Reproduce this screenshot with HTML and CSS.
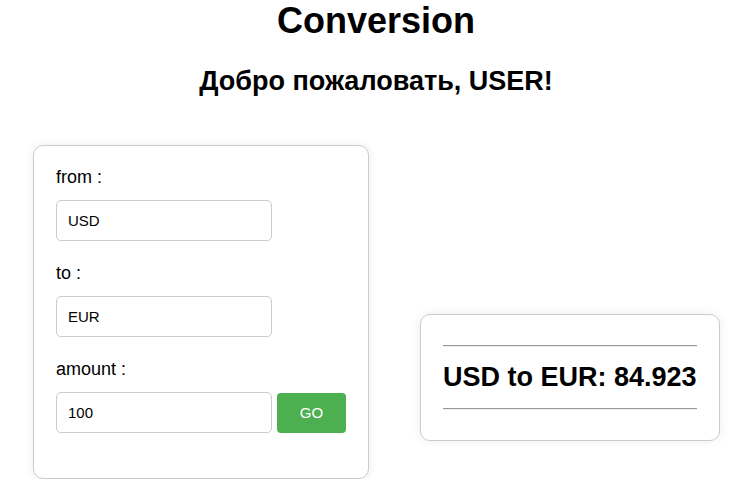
FILE: index.html
```html
<!DOCTYPE html>
<html lang="ru">
<head>
<meta charset="utf-8">
<title>Conversion</title>
<link rel="stylesheet" href="styles.css">
</head>
<body>
<header class="header">
  <h1 class="title">Conversion</h1>
  <h2 class="welcome">Добро пожаловать, USER!</h2>
</header>
<main class="layout">
  <form class="card form-card">
    <label class="field-label" for="from">from :</label>
    <input class="field-input" id="from" type="text" value="USD">
    <label class="field-label" for="to">to :</label>
    <input class="field-input" id="to" type="text" value="EUR">
    <label class="field-label" for="amount">amount :</label>
    <div class="amount-row">
      <input class="field-input amount-input" id="amount" type="text" value="100">
      <button class="go-button" type="button">GO</button>
    </div>
  </form>
  <section class="card result-card">
    <hr class="rule">
    <h2 class="result">USD to EUR: 84.923</h2>
    <hr class="rule">
  </section>
</main>
</body>
</html>
```
FILE: styles.css
```css
html, body {
  margin: 0;
  padding: 0;
  background: #ffffff;
}

body {
  font-family: "Liberation Sans", Arial, sans-serif;
  color: #000000;
}

.header {
  text-align: center;
  padding-left: 7px;
}

.title {
  margin: 0;
  font-size: 36px;
  font-weight: bold;
  line-height: normal;
}

.welcome {
  margin: 24px 0 0;
  font-size: 27px;
  font-weight: bold;
  line-height: normal;
}

.layout {
  display: flex;
  align-items: flex-start;
  gap: 51px;
  padding: 48px 0 0 33px;
}

.card {
  background: #ffffff;
  border: 1px solid #cccccc;
  border-radius: 10px;
  box-shadow: 0 0 10px rgba(0, 0, 0, 0.08);
}

.form-card {
  display: flex;
  flex-direction: column;
  align-items: flex-start;
  width: 290px;
  padding: 21px 22px 23px;
  margin: 0;
}

.field-label {
  display: block;
  font-size: 18px;
  line-height: normal;
  margin-bottom: 12px;
}

.field-input {
  box-sizing: border-box;
  width: 216px;
  height: 41px;
  padding: 0 11px;
  margin: 0 0 22px;
  border: 1px solid #cccccc;
  border-radius: 5px;
  font-family: "Liberation Sans", Arial, sans-serif;
  font-size: 15px;
  color: #000000;
  background: #ffffff;
  outline: none;
}

.amount-row {
  display: flex;
  align-items: center;
  gap: 5px;
  margin-bottom: 22px;
}

.amount-input {
  margin: 0;
}

.go-button {
  box-sizing: border-box;
  width: 69px;
  height: 40px;
  padding: 0;
  border: none;
  border-radius: 4px;
  background: #4caf50;
  color: #ffffff;
  font-family: "Liberation Sans", Arial, sans-serif;
  font-size: 15px;
  cursor: pointer;
}

.result-card {
  margin-top: 169px;
  padding: 30px 22px 30px;
}

.rule {
  margin: 0;
  border: none;
  border-top: 1px solid #999999;
  border-bottom: 1px solid #eeeeee;
}

.result {
  margin: 15px 0;
  font-size: 27px;
  font-weight: bold;
  line-height: normal;
  white-space: nowrap;
}
```
